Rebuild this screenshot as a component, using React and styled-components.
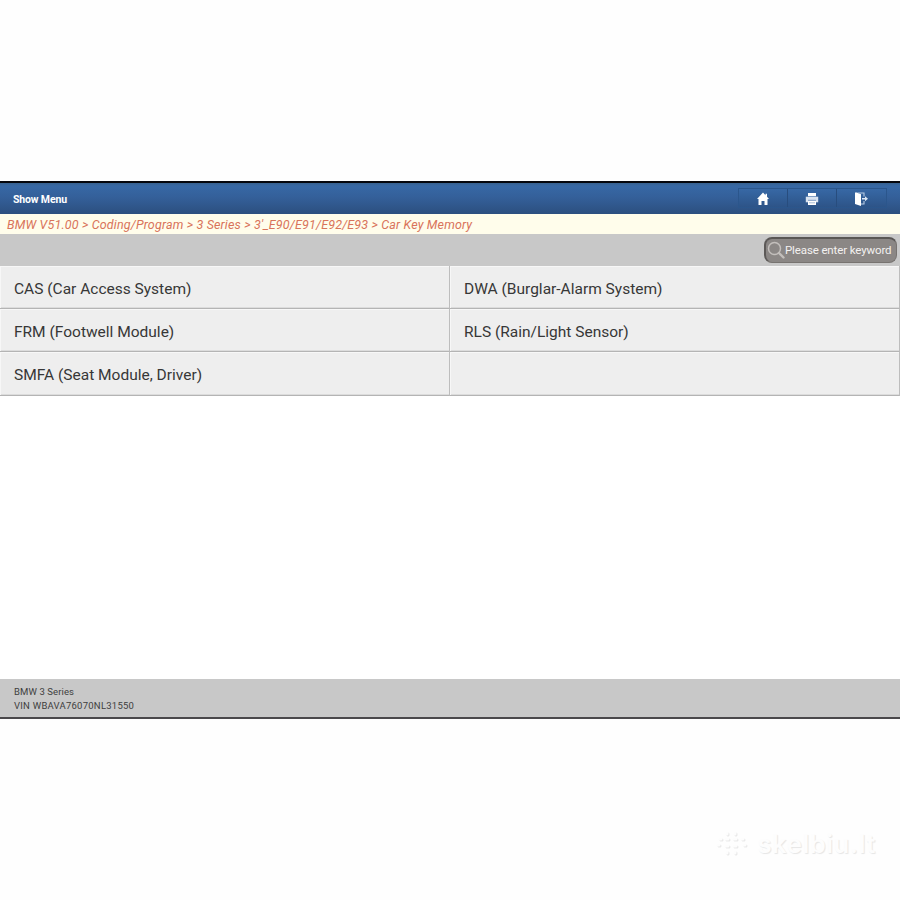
import React from "react";
import styled, { createGlobalStyle } from "styled-components";

const GlobalStyle = createGlobalStyle`
  * { box-sizing: border-box; }
  body { margin: 0; background: #fff; font-family: Roboto, "Liberation Sans", sans-serif; }
`;

const Page = styled.div`
  display: flex;
  flex-direction: column;
  width: 900px;
  height: 900px;
  padding-top: 181px;
  overflow: hidden;
  background: #fefefe;
`;

const Screen = styled.main`
  display: flex;
  flex-direction: column;
  height: 538px;
  flex: none;
  border-top: 2px solid #05070d;
  border-bottom: 2px solid #4a484b;
  background: #fff;
`;

const TitleBar = styled.header`
  display: flex;
  align-items: center;
  justify-content: space-between;
  height: 31px;
  flex: none;
  padding: 0 13px 1px;
  background: linear-gradient(#37618f 0, #3768a5 3px, #34609a 45%, #2c4f7f 100%);
`;

const Title = styled.h1`
  margin: 0;
  padding-top: 3px;
  color: #fff;
  font-size: 10.5px;
  line-height: 16px;
  font-weight: 700;
  letter-spacing: -0.15px;
`;

const Tools = styled.nav`
  display: flex;
  height: 20px;
  border: 1px solid #2b568c;
`;

const ToolButton = styled.button`
  display: flex;
  align-items: center;
  justify-content: center;
  width: 49px;
  height: 18px;
  padding: 2px 0 0;
  border: 0;
  border-right: 1px solid #284d7e;
  background: linear-gradient(#3768a5, #2d5488);
  color: #fff;
  &:last-child { border-right: 0; }
`;

const Breadcrumb = styled.div`
  height: 20px;
  flex: none;
  padding-left: 7px;
  background: #fffdeb;
  color: #d9735a;
  font-size: 12.5px;
  line-height: 21px;
  font-style: italic;
  letter-spacing: 0.16px;
  white-space: nowrap;
`;

const SearchBar = styled.div`
  display: flex;
  justify-content: flex-end;
  height: 32px;
  flex: none;
  padding: 3px 3px 0 0;
  background: #c8c8c8;
`;

const SearchField = styled.label`
  display: flex;
  align-items: center;
  width: 133px;
  height: 26px;
  padding: 0 0 2px 1px;
  border: 1px solid #777370;
  border-top: 2px solid #595654;
  border-left: 2px solid #5c5957;
  border-radius: 8px;
  background: #8b8785;
  color: #f3f1f0;
  font-size: 11.5px;
  letter-spacing: -0.13px;
  white-space: nowrap;
`;

const MenuGrid = styled.div`
  display: grid;
  grid-template-columns: 450px 450px;
  grid-template-rows: 43px 43px 44px;
  flex: none;
`;

const MenuCell = styled.div`
  display: flex;
  align-items: center;
  padding: 3px 0 0 14px;
  border-right: 1px solid #bdbdbd;
  border-bottom: 1px solid #b4b4b4;
  background: #eee;
  box-shadow: inset 1px 1px #f7f7f7, inset 0 -1px #dcdcdc;
  color: #373737;
  font-size: 15.5px;
  white-space: nowrap;
`;

const VehicleInfo = styled.footer`
  height: 38px;
  margin-top: auto;
  padding: 6px 14px;
  background: #c8c8c8;
  color: #3e3e3e;
  font-size: 9.5px;
  line-height: 13.5px;
`;

const InfoLine = styled.div`
  letter-spacing: ${({ $tracking }) => $tracking};
`;

const Brand = styled.div`
  display: flex;
  align-items: center;
  gap: 9px;
  height: 32px;
  margin: 109px 24px 0 auto;
  color: #fdfdfd;
  text-shadow: 1px 1px 1px #e6e6e6;
  font: 600 25.5px/32px Inter, sans-serif;
  letter-spacing: 0.65px;
`;

const HomeIcon = () => (
  <svg width="14" height="14" viewBox="0 0 14 14" fill="currentColor">
    <path d="M7 .5 1 7h1.5v6h3V9h3v4h3V7H13L11 4.8V1.7H9.5v1.5z" />
  </svg>
);

const PrinterIcon = () => (
  <svg width="14" height="14" viewBox="0 0 14 14">
    <path d="M3 1h8v3H3z" fill="#fff" />
    <path d="M.8 4.7h12.4v5.6H.8z" fill="#d9e3f0" />
    <path d="M3 8.5h8V13H3z" fill="#fff" />
    <path d="M3 4.5h8M3 8.3h8" stroke="#7f9dc4" />
    <path d="M4 10.8h6" stroke="#a9bdd8" />
  </svg>
);

const ExitIcon = () => (
  <svg width="15" height="14" viewBox="0 0 15 14">
    <path d="M1 .5h2l4 1.7V14L1 12z" fill="#fff" />
    <path d="M4 1h6v3.5M10 9v3H7" fill="none" stroke="#b8cce4" strokeWidth="1.1" />
    <path d="M8 6h3V4.3l3 2.5-3 2.5V7.6H8z" fill="#dce8f6" />
  </svg>
);

const SearchIcon = () => (
  <svg width="18" height="20" viewBox="0 0 18 20" fill="none" stroke="#c3bfbc">
    <circle cx="7.5" cy="8.5" r="6" strokeWidth="1.5" />
    <path d="m12 13 4.5 4.5" strokeWidth="2.4" strokeLinecap="round" />
  </svg>
);

const BrandIcon = () => (
  <svg width="32" height="28" viewBox="0 0 32 28" fill="none" strokeLinecap="round" strokeWidth="3">
    <path d="M12 4v1M20 4v1M5 10h1M11 10h2M19 10h2M27 10h1M3 16h1M11 17h2M19 17h2M29 16h1M12 23v1M20 23v1" stroke="#e9e9e9" />
    <path d="M11 3v1M19 3v1M4 9h1M10 9h2M18 9h2M26 9h1M2 15h1M10 16h2M18 16h2M28 15h1M11 22v1M19 22v1" stroke="#fdfdfd" />
  </svg>
);

const tools = [
  ["Home", HomeIcon],
  ["Print", PrinterIcon],
  ["Exit", ExitIcon],
];

const menu = [
  "CAS (Car Access System)",
  "DWA (Burglar-Alarm System)",
  "FRM (Footwell Module)",
  "RLS (Rain/Light Sensor)",
  "SMFA (Seat Module, Driver)",
  "",
];

export default function App() {
  return (
    <Page>
      <GlobalStyle />
      <Screen>
        <TitleBar>
          <Title>Show Menu</Title>
          <Tools>
            {tools.map(([name, Icon]) => (
              <ToolButton key={name} aria-label={name}><Icon /></ToolButton>
            ))}
          </Tools>
        </TitleBar>
        <Breadcrumb>{"BMW V51.00 > Coding/Program > 3 Series > 3'_E90/E91/E92/E93 > Car Key Memory"}</Breadcrumb>
        <SearchBar>
          <SearchField><SearchIcon />Please enter keyword</SearchField>
        </SearchBar>
        <MenuGrid>
          {menu.map((label, i) => <MenuCell key={i}>{label}</MenuCell>)}
        </MenuGrid>
        <VehicleInfo>
          <InfoLine $tracking="0.1px">BMW 3 Series</InfoLine>
          <InfoLine $tracking="0.24px">VIN WBAVA76070NL31550</InfoLine>
        </VehicleInfo>
      </Screen>
      <Brand><BrandIcon />skelbiu.lt</Brand>
    </Page>
  );
}
